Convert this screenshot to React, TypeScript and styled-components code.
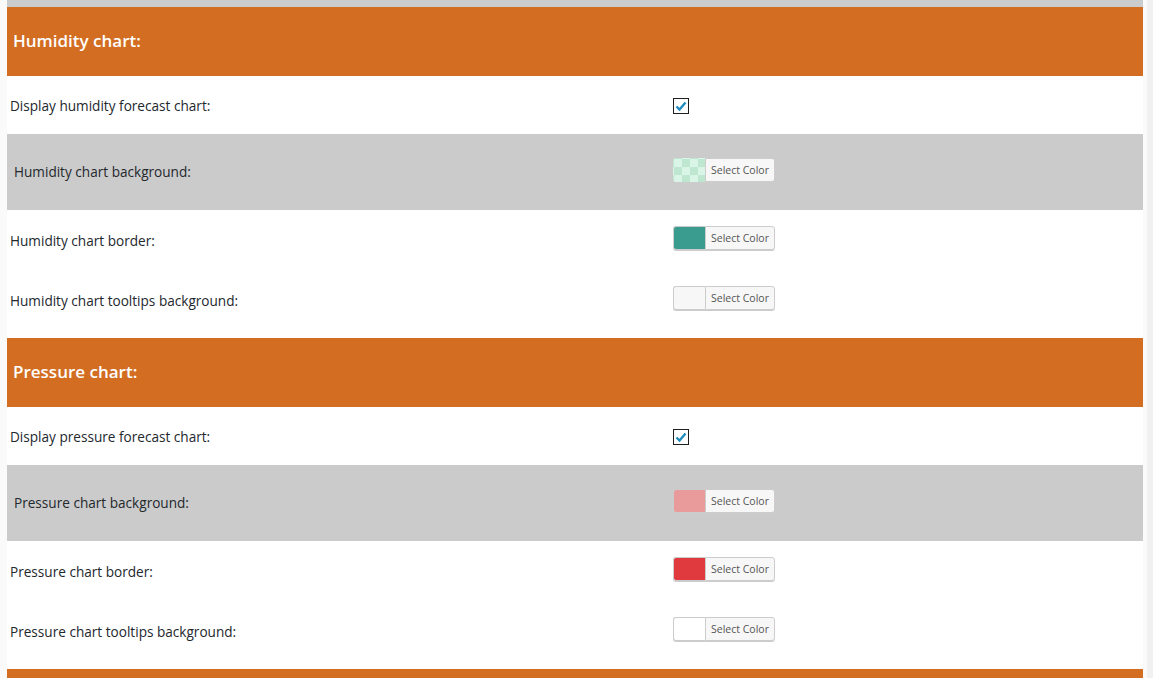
import React from "react";
import styled, { createGlobalStyle } from "styled-components";

const GlobalStyle = createGlobalStyle`
  html, body {
    margin: 0;
    padding: 0;
    background: #fafafa;
    overflow: hidden;
  }
  body {
    font-family: "Open Sans", "Noto Sans", "Liberation Sans", sans-serif;
    color: #23282d;
  }
`;

const Page = styled.div`
  display: flex;
  height: 678px;
  padding-left: 7px;
  padding-right: 4px;
  border-right: 6px solid #f1f1f1;
  background: #fafafa;
`;

const Content = styled.div`
  flex: 1;
  display: flex;
  flex-direction: column;
  background: #fff;
  overflow: hidden;
`;

const TopStrip = styled.div`
  height: 7px;
  flex-shrink: 0;
  background: #cacccd;
`;

const Header = styled.div`
  height: 69px;
  flex-shrink: 0;
  display: flex;
  align-items: center;
  padding-left: 6px;
  padding-bottom: 2px;
  box-sizing: border-box;
  background: #d26d22;
  color: #fff;
  font-size: 17px;
  font-weight: 600;
`;

const Row = styled.div<{ $h: number; $gray?: boolean; $extra?: number }>`
  height: ${(p) => p.$h}px;
  flex-shrink: 0;
  display: flex;
  align-items: center;
  box-sizing: border-box;
  padding-bottom: ${(p) => p.$extra || 0}px;
  background: ${(p) => (p.$gray ? "#cbcbcb" : "#fff")};
`;

const Label = styled.div<{ $gray?: boolean }>`
  width: 666px;
  flex-shrink: 0;
  box-sizing: border-box;
  padding-left: ${(p) => (p.$gray ? 7 : 3)}px;
  padding-bottom: ${(p) => (p.$gray ? 2 : 0)}px;
  font-size: 13.6px;
  color: #23282d;
`;

const Value = styled.div`
  display: flex;
  align-items: center;
`;

const Checkbox = styled.span`
  width: 14px;
  height: 14px;
  border: 1px solid #1e1e1e;
  background: #fff;
  display: flex;
  align-items: center;
  justify-content: center;
  margin-top: 1px;
`;

const Picker = styled.div`
  display: flex;
  height: 24px;
  border-radius: 3px;
  box-shadow: 0 1px 0 #ccc;
  margin-top: -5px;
`;

const Swatch = styled.span<{ $color: string; $checker?: boolean }>`
  width: 32px;
  box-sizing: border-box;
  border: 1px solid #ccc;
  border-right: none;
  border-radius: 3px 0 0 3px;
  background: ${(p) =>
    p.$checker
      ? "repeating-conic-gradient(#bfe6d1 0% 25%, #d9f5e8 0% 50%) 0 0 / 16px 16px"
      : p.$color};
  ${(p) => (p.$checker ? "border-color: transparent;" : "")}
`;

const PickButton = styled.span`
  width: 70px;
  box-sizing: border-box;
  border: 1px solid #ccc;
  border-radius: 0 3px 3px 0;
  background: #f7f7f7;
  color: #555;
  font-size: 10.5px;
  display: flex;
  align-items: center;
  justify-content: center;
`;

const Check = () => (
  <Checkbox>
    <svg width="12" height="12" viewBox="0 0 12 12">
      <path d="M1.5 6.5 L4.5 9.5 L10.5 2.5" fill="none" stroke="#1e8cbe" strokeWidth="2.4" />
    </svg>
  </Checkbox>
);

const ColorPick = ({ color, checker }: { color: string; checker?: boolean }) => (
  <Picker>
    <Swatch $color={color} $checker={checker} />
    <PickButton>Select Color</PickButton>
  </Picker>
);

type Section = {
  title: string;
  name: string;
  bg: string;
  checker?: boolean;
  border: string;
  tooltip: string;
};

const sections: Section[] = [
  { title: "Humidity chart:", name: "Humidity", bg: "#cdeedd", checker: true, border: "#3a9b8f", tooltip: "#f7f7f7" },
  { title: "Pressure chart:", name: "Pressure", bg: "#e99a9b", border: "#e0393e", tooltip: "#ffffff" },
];

const ChartSection = ({ s }: { s: Section }) => (
  <>
    <Header>{s.title}</Header>
    <Row $h={58}>
      <Label>Display {s.name.toLowerCase()} forecast chart:</Label>
      <Value>
        <Check />
      </Value>
    </Row>
    <Row $h={76} $gray>
      <Label $gray>{s.name} chart background:</Label>
      <Value>
        <ColorPick color={s.bg} checker={s.checker} />
      </Value>
    </Row>
    <Row $h={60}>
      <Label>{s.name} chart border:</Label>
      <Value>
        <ColorPick color={s.border} />
      </Value>
    </Row>
    <Row $h={68} $extra={8}>
      <Label>{s.name} chart tooltips background:</Label>
      <Value>
        <ColorPick color={s.tooltip} />
      </Value>
    </Row>
  </>
);

const App = () => (
  <>
    <GlobalStyle />
    <Page>
      <Content>
        <TopStrip />
        {sections.map((s) => (
          <ChartSection key={s.name} s={s} />
        ))}
        <Header />
      </Content>
    </Page>
  </>
);

export default App;
